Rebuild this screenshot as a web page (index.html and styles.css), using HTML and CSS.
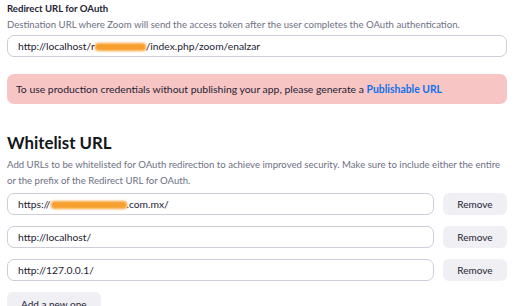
FILE: index.html
```html
<!DOCTYPE html>
<html lang="en">
<head>
    <meta charset="UTF-8">
    <meta name="viewport" content="width=device-width, initial-scale=1.0">
    <title>OAuth settings</title>
    <link rel="stylesheet" href="styles.css">
</head>
<body>
    <div class="page">
        <div class="field">
            <label class="field-label">Redirect URL for OAuth</label>
            <p class="hint">Destination URL where Zoom will send the access token after the user completes the OAuth authentication.</p>
            <div class="text-box">http://localhost/r<span class="redact redact-path"></span>/index.php/zoom/enalzar</div>
        </div>

        <div class="banner">
            To use production credentials without publishing your app, please generate a <a href="#" class="link">Publishable URL</a>
        </div>

        <h2 class="section-title">Whitelist URL</h2>
        <p class="hint hint-wide">Add URLs to be whitelisted for OAuth redirection to achieve improved security. Make sure to include either the entire or the prefix of the Redirect URL for OAuth.</p>

        <div class="url-list">
            <div class="url-row">
                <div class="text-box">https://<span class="redact redact-host"></span>.com.mx/</div>
                <button class="btn">Remove</button>
            </div>
            <div class="url-row">
                <div class="text-box">http://localhost/</div>
                <button class="btn">Remove</button>
            </div>
            <div class="url-row">
                <div class="text-box">http://127.0.0.1/</div>
                <button class="btn">Remove</button>
            </div>
        </div>

        <button class="btn btn-add">Add a new one</button>
    </div>
</body>
</html>
```

FILE: styles.css
```css
body {
    margin: 0;
    background: #fff;
    font-family: Lato, sans-serif;
    color: #232333;
}
.page {
    padding: 2px 10px 0 7px;
}
.field-label {
    display: block;
    font-size: 9.6px;
    font-weight: 700;
    line-height: 14px;
    color: #232333;
}
.hint {
    margin: 2px 0 0;
    font-size: 9.6px;
    line-height: 14px;
    color: #6e7083;
}
.text-box {
    box-sizing: border-box;
    height: 22px;
    margin-top: 3px;
    padding: 0 10px;
    border: 1px solid #cdcddb;
    border-radius: 7px;
    font-size: 10.3px;
    line-height: 20px;
    color: #232333;
    white-space: nowrap;
    overflow: hidden;
}
.redact {
    display: inline-block;
    height: 8px;
    vertical-align: -1px;
    background: #f7a030;
    filter: blur(1.2px);
    border-radius: 3px;
}
.redact-path {
    width: 51px;
}
.redact-host {
    width: 76px;
}
.banner {
    margin-top: 17px;
    height: 30px;
    box-sizing: border-box;
    padding: 0 9px;
    background: #f8c5c5;
    border-radius: 7px;
    font-size: 10.4px;
    line-height: 30px;
    color: #232333;
    white-space: nowrap;
}
.link {
    color: #0e71eb;
    font-weight: 700;
    text-decoration: none;
}
.section-title {
    margin: 28px 0 0;
    font-size: 16.8px;
    font-weight: 700;
    line-height: 22px;
    color: #131619;
}
.hint-wide {
    margin-top: 3px;
    line-height: 16px;
}
.url-list {
    margin-top: 4px;
}
.url-row {
    display: flex;
    align-items: center;
    gap: 9px;
    margin-bottom: 11px;
}
.url-row .text-box {
    flex: 1;
    margin-top: 0;
}
.btn {
    font-family: Lato, sans-serif;
    font-size: 10px;
    color: #232333;
    background: #efeff4;
    border: none;
    border-radius: 6px;
    cursor: pointer;
}
.url-row .btn {
    width: 64px;
    height: 22px;
    padding: 0;
}
.btn-add {
    height: 24px;
    padding: 0 14px;
}
```
